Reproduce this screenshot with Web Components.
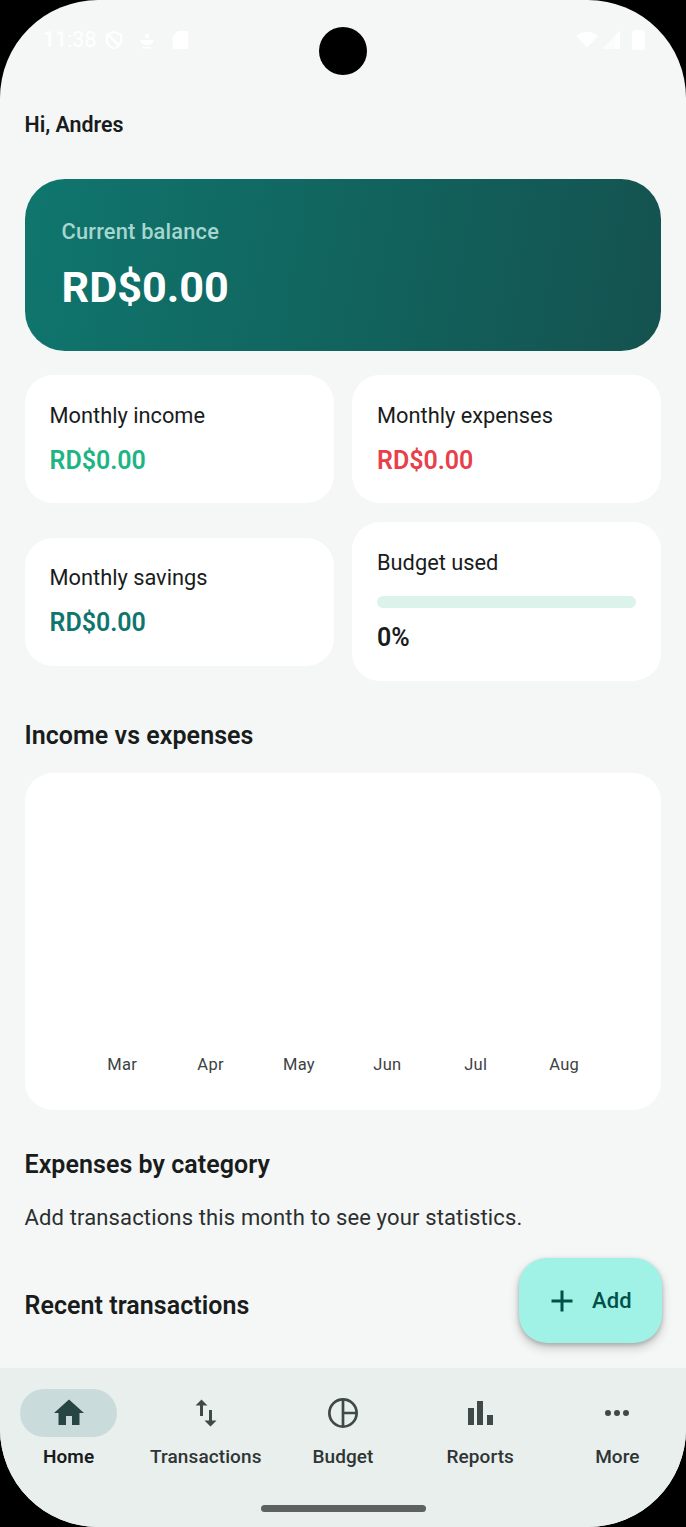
<!DOCTYPE html>
<html lang="en"><head><meta charset="utf-8"><title>Home</title>
<style>
html,body{margin:0;padding:0;background:#000;}
body{font-family:Roboto,"Noto Sans",sans-serif;color:#191c1c;}
</style></head>
<body>
<phone-frame>
  <status-bar slot="status"></status-bar>
  <span slot="greeting">Hi, Andres</span>
  <balance-card label="Current balance" amount="RD$0.00"></balance-card>
  <div class="grid" slot="grid">
    <stat-card label="Monthly income" amount="RD$0.00" color="#1db584" pad="27"></stat-card>
    <stat-card label="Monthly expenses" amount="RD$0.00" color="#e8404a" pad="27"></stat-card>
    <stat-card label="Monthly savings" amount="RD$0.00" color="#0f766e" pad="26"></stat-card>
    <budget-card label="Budget used" value="0%"></budget-card>
  </div>
  <section-title slot="t1">Income vs expenses</section-title>
  <chart-card slot="chart"></chart-card>
  <section-title slot="t2">Expenses by category</section-title>
  <span slot="hint">Add transactions this month to see your statistics.</span>
  <section-title slot="t3">Recent transactions</section-title>
  <add-fab slot="fab"></add-fab>
  <bottom-nav slot="nav"></bottom-nav>
</phone-frame>
<script>
const mk=(name,html)=>{customElements.define(name,class extends HTMLElement{
  connectedCallback(){ if(this.shadowRoot) return; const r=this.attachShadow({mode:'open'}); r.innerHTML=typeof html==='function'?html(this):html; }
});};
mk('phone-frame',`<style>
:host{display:block;width:686px;height:1527px;background:#000;overflow:hidden}
.screen{position:relative;width:686px;height:1527px;background:#f5f7f6;border-radius:98px;overflow:hidden;display:flex;flex-direction:column}
.camera{position:absolute;left:319px;top:27px;width:48px;height:48px;border-radius:50%;background:#000}
.main{flex:1;min-height:0;padding:0 25px 0 24.5px;display:flex;flex-direction:column;overflow:hidden}
.greet{font-size:21.4px;font-weight:600;line-height:28px;margin-top:29px;color:#191c1c}
.cards{margin-top:40px;display:flex;flex-direction:column}
.stats{margin-top:24px}
.t1{margin-top:40px;display:block}
.chart{margin-top:22px}
.t2{margin-top:40px}
.hint{margin-top:24px;font-size:22px;line-height:28px;color:#2b2f2f;letter-spacing:.14px}
.t3{margin-top:59px}
.fab{position:absolute;left:519px;top:1258px}
::slotted([slot=grid]){display:grid;grid-template-columns:309.5px 309px;column-gap:18px;row-gap:19px;align-items:center}
</style>
<div class="screen">
  <slot name="status"></slot>
  <div class="main">
    <div class="greet"><slot name="greeting"></slot></div>
    <div class="cards"><slot></slot></div>
    <div class="stats"><slot name="grid"></slot></div>
    <div class="t1"><slot name="t1"></slot></div>
    <div class="chart"><slot name="chart"></slot></div>
    <div class="t2"><slot name="t2"></slot></div>
    <div class="hint"><slot name="hint"></slot></div>
    <div class="t3"><slot name="t3"></slot></div>
  </div>
  <slot name="nav"></slot>
  <div class="camera"></div>
  <div class="fab"><slot name="fab"></slot></div>
</div>`);
mk('status-bar',`<style>
:host{display:flex;height:82px;flex:none;box-sizing:border-box;padding:28px 41px 0 43px;justify-content:space-between;align-items:flex-start;color:#fff}
.l,.r{display:flex;align-items:center;height:24px}
.t{font-size:21.5px;line-height:24px;margin-right:7px;width:54px;white-space:nowrap}
svg{display:block;fill:#fff}
</style>
<div class="l"><span class="t">11:38</span>
<svg width="20" height="24" viewBox="0 0 22 24" style="margin-right:15px"><path fill-rule="evenodd" d="M11 2 2 5.500V12c0 5 3.800 9 9 10 5.200-1 9-5 9-10V5.500zm0 2.400 6.500 2.500V12c0 1.400-.4 2.700-1 3.800L6.500 6.200zM4.500 8l10.400 10.300c-1.100 1-2.400 1.700-3.900 2.100-3.800-1-6.500-4.300-6.500-8.400z"/></svg>
<svg width="16" height="24" viewBox="0 0 16 24" style="margin-right:17px"><circle cx="8" cy="8" r="2.300"/><path d="M1.500 12h13c0 2.800-2.700 5-6.500 5s-6.500-2.200-6.500-5zM4 19h8v1.500H4z"/></svg>
<svg width="17" height="20" viewBox="0 0 17 22"><path d="M6 1h9a2 2 0 0 1 2 2v16a2 2 0 0 1-2 2H2a2 2 0 0 1-2-2V7z"/></svg></div>
<div class="r">
<svg width="22" height="16" viewBox="0 0 24 18" style="margin-right:4px"><path d="M12 17.500 0 4.500C3 1.800 7.300 0 12 0s9 1.800 12 4.500z"/></svg>
<svg width="18" height="18" viewBox="0 0 19 19" style="margin-right:12px"><path d="M19 0v19H0z" opacity=".6"/><path d="M19 0v19h-5V5z" opacity=".9"/></svg>
<svg width="13" height="20" viewBox="0 0 13 20"><path d="M3 1V0h7v1h1a2 2 0 0 1 2 2v15a2 2 0 0 1-2 2H2a2 2 0 0 1-2-2V3a2 2 0 0 1 2-2z"/></svg></div>`);
mk('balance-card',h=>`<style>
:host{display:block;height:172px;box-sizing:border-box;border-radius:40px;padding:39px 37px 0;color:#fff;background:linear-gradient(100deg,#0f766e 0%,#14524f 100%)}
.l{font-size:21.8px;line-height:28px;font-weight:500;color:#a6d6cf;letter-spacing:.2px}
.a{font-size:43.2px;line-height:52px;font-weight:700;margin-top:16px}
</style><div class="l">${h.getAttribute('label')}</div><div class="a">${h.getAttribute('amount')}</div>`);
mk('stat-card',h=>`<style>
:host{display:block;height:128px;box-sizing:border-box;border-radius:28px;background:#fff;padding:${h.getAttribute('pad')}px 25px 0}
.l{font-size:21.8px;line-height:28px;font-weight:450;color:#191c1c}
.a{font-size:25px;line-height:30px;font-weight:600;margin-top:16px;color:${h.getAttribute('color')}}
</style><div class="l">${h.getAttribute('label')}</div><div class="a">${h.getAttribute('amount')}</div>`);
mk('budget-card',h=>`<style>
:host{display:block;height:159px;box-sizing:border-box;border-radius:28px;background:#fff;padding:27px 25px 0}
.l{font-size:21.8px;line-height:28px;font-weight:450;color:#191c1c}
.b{height:12px;border-radius:6px;background:#dcf3ec;margin-top:19px}
.a{font-size:25px;line-height:30px;font-weight:600;margin-top:15px;color:#191c1c}
</style><div class="l">${h.getAttribute('label')}</div><div class="b"></div><div class="a">${h.getAttribute('value')}</div>`);
mk('section-title',`<style>:host{display:block;font-size:25px;line-height:30px;font-weight:600;color:#191c1c;letter-spacing:.05px}</style><slot></slot>`);
mk('chart-card',`<style>
:host{display:block;height:337px;box-sizing:border-box;border-radius:28px;background:#fff;position:relative}
.x{position:absolute;left:53.5px;top:282px;display:grid;grid-template-columns:repeat(6,88.4px);font-size:16.5px;line-height:20px;color:#3c4242;text-align:center;letter-spacing:.3px}
</style><div class="x"><span>Mar</span><span>Apr</span><span>May</span><span>Jun</span><span>Jul</span><span>Aug</span></div>`);
mk('add-fab',`<style>
:host{display:flex;width:143px;height:85px;box-sizing:border-box;border-radius:28px;background:#a0f2e6;align-items:center;padding-left:31px;color:#00504a;box-shadow:0 5px 9px 2px rgba(0,0,0,.13),0 2px 4px rgba(0,0,0,.22)}
svg{display:block;margin-right:18px}
span{font-size:22px;font-weight:500;letter-spacing:.1px}
</style><svg width="24" height="24" viewBox="0 0 24 24"><path d="M12 1.500v21M1.500 12h21" stroke="#00504a" stroke-width="3" fill="none"/></svg><span>Add</span>`);
const icons={
home:'<path d="M10 20v-6h4v6h5v-8h3L12 3 2 12h3v8z" />',
swap:'<path d="M9 3 5 7h3v7h2V7h3zm7 14v-7h-2v7h-3l4 4 4-4z" />',
pie:'<circle cx="12" cy="12" r="9.1" fill="none" stroke="currentColor" stroke-width="1.8"/><path d="M12 3v18M12 12h9" stroke="currentColor" stroke-width="1.8" fill="none"/>',
bars:'<path d="M4 8.670h4V20H4zM10 4h4v16h-4zM16.670 13.330h4V20h-4z" />',
more:'<path d="M6 10a2 2 0 1 0 0 4 2 2 0 0 0 0-4zm12 0a2 2 0 1 0 0 4 2 2 0 0 0 0-4zm-6 0a2 2 0 1 0 0 4 2 2 0 0 0 0-4z" />'};
mk('bottom-nav',()=>{const it=[['Home','home',1],['Transactions','swap'],['Budget','pie'],['Reports','bars'],['More','more']];
return `<style>
:host{display:block;height:159px;flex:none;background:#e9efed;position:relative}
.row{display:grid;grid-template-columns:repeat(5,1fr);padding:21px 0 0;width:686px}
.i{display:flex;flex-direction:column;align-items:center}
.p{width:97px;height:48px;border-radius:24px;display:flex;align-items:center;justify-content:center;color:#3f4948}
.on .p{background:#c9dcdb;color:#274543}
svg{width:36px;height:36px;fill:currentColor;display:block}
.n{font-size:19px;line-height:24px;font-weight:500;color:#2f3535;margin-top:8px;letter-spacing:.1px;white-space:nowrap}
.on .n{color:#191c1c;font-weight:600}
.bar{position:absolute;left:261px;top:137px;width:165px;height:7px;border-radius:4px;background:#5d6261}
</style><div class="row">${it.map(([n,k,a])=>`<div class="i ${a?'on':''}"><div class="p"><svg viewBox="0 0 24 24">${icons[k]}</svg></div><div class="n">${n}</div></div>`).join('')}</div><div class="bar"></div>`});
</script>
</body></html>
